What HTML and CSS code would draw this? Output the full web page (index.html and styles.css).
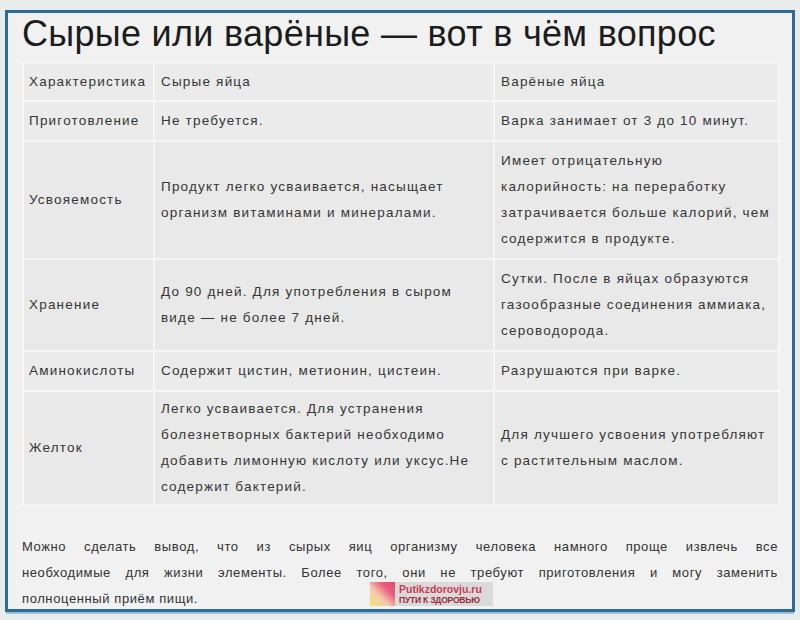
FILE: index.html
```html
<!DOCTYPE html>
<html lang="ru">
<head>
<meta charset="utf-8">
<title>Сырые или варёные</title>
<link rel="stylesheet" href="styles.css">
</head>
<body>
<div class="frame">
  <h1 class="title">Сырые или варёные — вот в чём вопрос</h1>
  <table class="cmp">
    <colgroup>
      <col class="c1"><col class="c2"><col class="c3">
    </colgroup>
    <tr class="r1 head">
      <td>Характеристика</td>
      <td>Сырые яйца</td>
      <td>Варёные яйца</td>
    </tr>
    <tr class="r1">
      <td>Приготовление</td>
      <td>Не требуется.</td>
      <td>Варка занимает от 3 до 10 минут.</td>
    </tr>
    <tr>
      <td>Усвояемость</td>
      <td>Продукт легко усваивается, насыщает<br>организм витаминами и минералами.</td>
      <td>Имеет отрицательную<br>калорийность: на переработку<br>затрачивается больше калорий, чем<br>содержится в продукте.</td>
    </tr>
    <tr>
      <td>Хранение</td>
      <td>До 90 дней. Для употребления в сыром<br>виде — не более 7 дней.</td>
      <td>Сутки. После в яйцах образуются<br>газообразные соединения аммиака,<br>сероводорода.</td>
    </tr>
    <tr class="r1">
      <td>Аминокислоты</td>
      <td>Содержит цистин, метионин, цистеин.</td>
      <td>Разрушаются при варке.</td>
    </tr>
    <tr class="last">
      <td>Желток</td>
      <td>Легко усваивается. Для устранения<br>болезнетворных бактерий необходимо<br>добавить лимонную кислоту или уксус.Не<br>содержит бактерий.</td>
      <td>Для лучшего усвоения употребляют<br>с растительным маслом.</td>
    </tr>
  </table>
  <div class="summary">
    <span class="jl">Можно сделать вывод, что из сырых яиц организму человека намного проще извлечь все</span>
    <span class="jl">необходимые для жизни элементы. Более того, они не требуют приготовления и могу заменить</span>
    <span class="ll">полноценный приём пищи.</span>
  </div>
  <div class="wm">
    <div class="wm-logo"></div>
    <div class="wm-text">
      <div class="wm-site">Putikzdorovju.ru</div>
      <div class="wm-name">ПУТИ К ЗДОРОВЬЮ</div>
    </div>
  </div>
</div>
</body>
</html>
```
FILE: styles.css
```css
html, body {
  margin: 0;
  padding: 0;
}
body {
  background: #e8ecec;
  width: 800px;
  height: 620px;
  overflow: hidden;
  font-family: "Liberation Sans", Arial, sans-serif;
}
.frame {
  position: relative;
  margin: 10px 5px 0 5px;
  height: 596px;
  border: 3px solid #2e6c95;
  background: #f1f1f1;
  padding: 0 14px;
  box-shadow: 0 3px 0 -1px #9cc0d8;
}
.title {
  margin: 0 0 8px 0;
  font-size: 36px;
  font-weight: normal;
  line-height: 41px;
  color: #1c1c1c;
  letter-spacing: 0.3px;
  white-space: nowrap;
}
.cmp {
  width: 756px;
  border-collapse: collapse;
  table-layout: fixed;
  border: 2px solid #f6f6f6;
}
.c1 { width: 131px; }
.c2 { width: 340px; }
.c3 { width: 285px; }
.cmp td {
  background: #e9e9e9;
  border: 2px solid #f6f6f6;
  padding: 6px 6px;
  font-size: 13.5px;
  line-height: 26px;
  color: #363636;
  vertical-align: middle;
  letter-spacing: 1.2px;
  white-space: nowrap;
}
.cmp tr.r1 td {
  background: #ebebeb;
}
.cmp tr.head td {
  padding-top: 5px;
  padding-bottom: 5px;
}
.cmp tr.last td {
  padding-top: 4px;
  padding-bottom: 4px;
}
.cmp td:first-child {
  letter-spacing: 1.2px;
  padding-left: 5px;
}
.summary {
  margin-top: 28px;
  font-size: 13px;
  line-height: 26px;
  color: #333;
  letter-spacing: 0.6px;
}
.summary span {
  display: block;
}
.summary .jl {
  text-align: justify;
  text-align-last: justify;
}
.wm {
  position: absolute;
  left: 362px;
  top: 569px;
  display: flex;
  align-items: stretch;
  height: 24px;
}
.wm-logo {
  width: 25px;
  background: linear-gradient(45deg, #f4e06a 0%, #f6c0a0 40%, #e8446a 70%, #d23050 100%);
  opacity: 0.85;
}
.wm-text {
  background: #dadada;
  padding: 1px 4px 0 4px;
  width: 90px;
}
.wm-site {
  font-size: 10.5px;
  font-weight: bold;
  color: #d2394e;
  line-height: 12px;
}
.wm-name {
  font-size: 8.5px;
  font-weight: bold;
  color: #9a2a3a;
  line-height: 11px;
  letter-spacing: -0.2px;
}
```
